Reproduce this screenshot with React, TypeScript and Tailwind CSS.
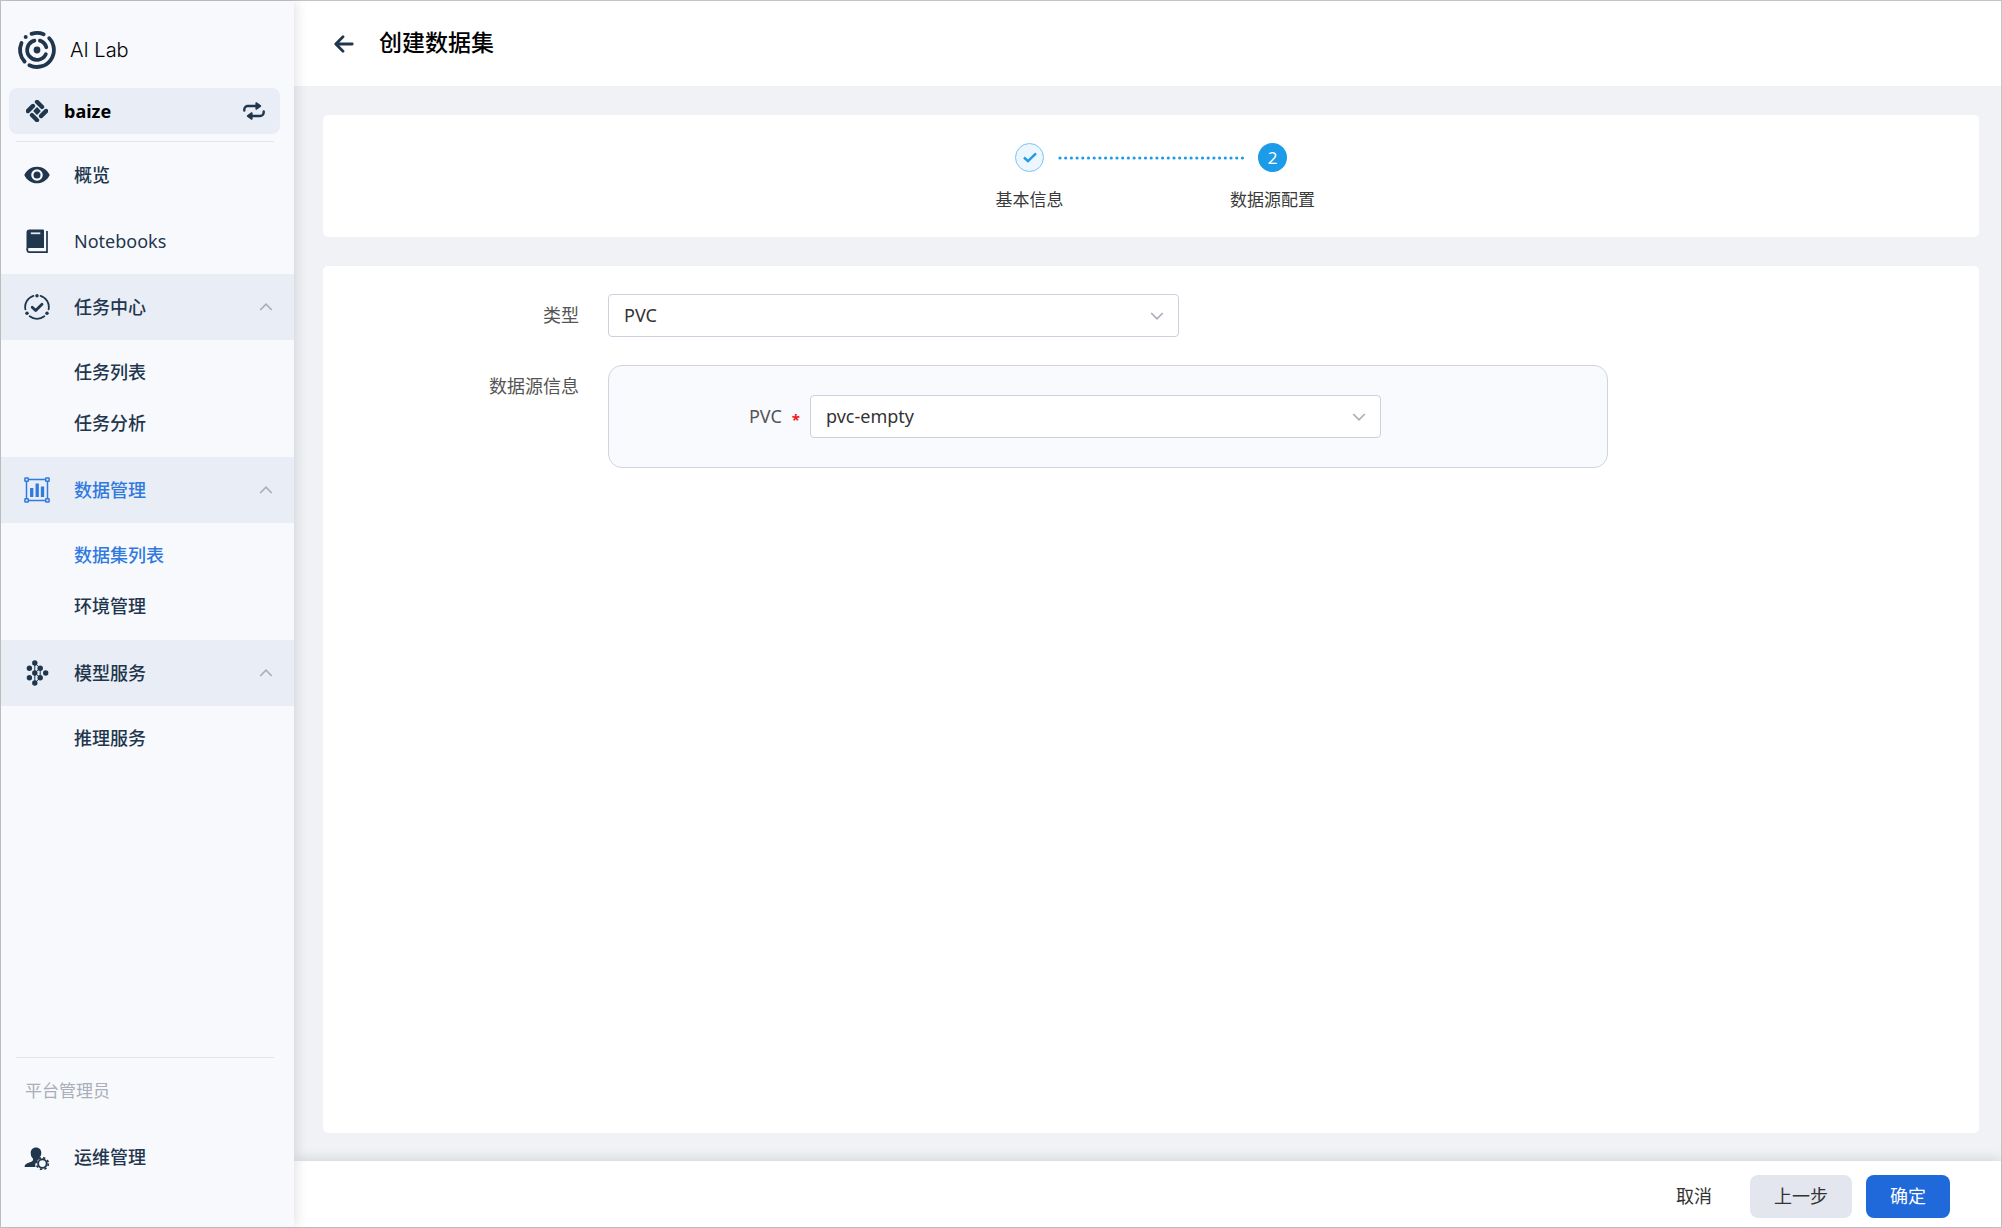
import React from "react";
import clsx from "clsx";

type IconProps = { className?: string };

const LogoIcon = ({ className }: IconProps) => (
  <svg viewBox="-20 -20 40 40" className={className} fill="none" stroke="currentColor" strokeWidth="3.8" strokeLinecap="round" aria-hidden="true">
    <path d="M-5.4 -16.1A17 17 0 0 1 6.6 -15.7" />
    <path d="M12.2 -11.8A17 17 0 0 1 -7.6 15.2" />
    <path d="M-15.5 -7A17 17 0 0 0 -12.4 11.6" />
    <path d="M-2.6 -9.4A9.8 9.8 0 1 0 8.8 4.3" />
    <path d="M2.9 -9.4A9.8 9.8 0 0 1 9.3 -2.8" />
    <circle cx="-11.3" cy="-12.9" r="2" fill="currentColor" stroke="none" />
    <circle r="3.4" fill="currentColor" stroke="none" />
  </svg>
);

const WorkspaceIcon = ({ className }: IconProps) => (
  <svg viewBox="-11 -11 22 22" className={className} fill="currentColor" aria-hidden="true">
    <g transform="rotate(45)">
      <rect x="-8.6" y="-8.6" width="11.4" height="4.3" rx="2" />
      <rect x="4.3" y="-8.6" width="4.3" height="11.4" rx="2" />
      <rect x="-2.8" y="4.3" width="11.4" height="4.3" rx="2" />
      <rect x="-8.6" y="-2.8" width="4.3" height="11.4" rx="2" />
      <rect x="-2.8" y="-2.8" width="5.6" height="5.6" rx="0.8" />
    </g>
  </svg>
);

const SwapIcon = ({ className }: IconProps) => (
  <svg viewBox="0 0 22 18" className={className} fill="none" stroke="currentColor" strokeWidth="2.4" strokeLinecap="round" strokeLinejoin="round" aria-hidden="true">
    <path d="M1.3 8.6V7.500A3.500 3.500 0 0 1 4.800 4H13" />
    <path d="M20.700 9.400v1.100A3.500 3.500 0 0 1 17.200 14H9" />
    <path d="M13.200 1v6L17.400 4zM8.800 11v6L4.600 14z" fill="currentColor" strokeWidth="1.600" />
  </svg>
);

const EyeIcon = ({ className }: IconProps) => (
  <svg viewBox="0 0 26 26" className={className} fill="currentColor" aria-hidden="true">
    <path
      fillRule="evenodd"
      d="M13 4.7C7.4 4.7 2.5 8 .3 13c2.2 5 7.1 8.3 12.7 8.3S23.5 18 25.7 13C23.5 8 18.6 4.7 13 4.7zM13 7.2a5.8 5.8 0 1 1 0 11.6 5.8 5.8 0 0 1 0-11.6z"
    />
    <circle cx="13" cy="13" r="3.5" />
  </svg>
);

const NotebookIcon = ({ className }: IconProps) => (
  <svg viewBox="0 0 26 26" className={className} fill="none" aria-hidden="true">
    <path d="M5.5 1.5H19a1 1 0 0 1 1 1V20H6a3.5 3.5 0 0 0-3.500 2V4.500a3 3 0 0 1 3-3z" fill="currentColor" />
    <path d="M6.800 5.300h9.500" stroke="#e3e8ef" strokeWidth="1.800" />
    <path d="M3.300 20.500v1.500a2.200 2.200 0 0 0 2.200 2.200H23V3" stroke="currentColor" strokeWidth="1.700" />
  </svg>
);

const TaskIcon = ({ className }: IconProps) => (
  <svg viewBox="-13 -13 26 26" className={className} fill="none" stroke="currentColor" strokeWidth="1.800" strokeLinecap="round" aria-hidden="true">
    <path d="M3.600 -11.200A11.800 11.800 0 0 1 11.600 2.400" />
    <path d="M-3.600 -11.200A11.800 11.800 0 0 0 -11.600 2.400" />
    <path d="M-7.300 9.300A11.800 11.800 0 0 0 7.300 9.300" />
    <path d="M-4.800 .2L-1.300 3.600L5 -2.700" strokeWidth="2.800" strokeLinejoin="round" />
    <g fill="currentColor" stroke="none">
      <circle cy="-11.300" r="1.700" />
      <circle cx="-10" cy="6.200" r="1.700" />
      <circle cx="10" cy="6.200" r="1.700" />
    </g>
  </svg>
);

const DataIcon = ({ className }: IconProps) => (
  <svg viewBox="0 0 26 26" className={className} fill="none" stroke="currentColor" strokeWidth="1.500" aria-hidden="true">
    <path d="M4.500 2.500h17M4.500 23.500h17M2.500 4.500v17M23.500 4.500v17" />
    <rect x=".9" y=".9" width="3.400" height="3.400" rx=".6" />
    <rect x="21.700" y=".9" width="3.400" height="3.400" rx=".6" />
    <rect x=".9" y="21.700" width="3.400" height="3.400" rx=".6" />
    <rect x="21.700" y="21.700" width="3.400" height="3.400" rx=".6" />
    <path d="M7.700 11v9M13.200 6.500V20M18.500 9.500V20" strokeWidth="3.300" />
  </svg>
);

const ModelIcon = ({ className }: IconProps) => (
  <svg viewBox="0 0 26 26" className={className} fill="currentColor" aria-hidden="true">
    <path d="M10.800 3v20M10.800 3l5.400 5.200v9.500L10.800 23M10.800 13l5.400 4.700M10.800 13l5.400-4.800" stroke="currentColor" strokeWidth="1" fill="none" />
    <circle cx="10.800" cy="3" r="2.700" />
    <circle cx="5.400" cy="8.200" r="2.700" />
    <circle cx="16.200" cy="8.200" r="2.700" />
    <circle cx="10.800" cy="13" r="2.700" />
    <circle cx="21.700" cy="13" r="2.700" />
    <circle cx="5.400" cy="17.700" r="2.700" />
    <circle cx="16.200" cy="17.700" r="2.700" />
    <circle cx="10.800" cy="23" r="2.700" />
  </svg>
);

const OpsIcon = ({ className }: IconProps) => (
  <svg viewBox="0 -2 26 26" className={className} fill="none" aria-hidden="true">
    <path
      fill="currentColor"
      d="M12 1.500c3.300 0 5.300 2.400 5.300 5.400 0 2-.8 3.800-2.100 5-.4.500-.5 1-.4 1.600A7 7 0 0 0 11.500 21H.6c0-2.700 2.400-3.700 5.200-4.700 2.400-.8 3.400-1.500 3.300-3-.1-.6-.3-1-.7-1.400A6.900 6.900 0 0 1 6.700 7c0-3.100 2-5.500 5.300-5.500z"
    />
    <circle cx="18.400" cy="17.600" r="4.300" stroke="currentColor" strokeWidth="1.900" />
    <circle cx="18.400" cy="17.600" r="5.900" stroke="currentColor" strokeWidth="1.700" strokeDasharray="2.300 2.334" />
  </svg>
);

const BackIcon = ({ className }: IconProps) => (
  <svg viewBox="0 0 20 18" className={className} fill="none" stroke="currentColor" strokeWidth="2.800" strokeLinecap="round" strokeLinejoin="round" aria-hidden="true">
    <path d="M18.200 9H2M9 1.800L1.800 9L9 16.200" />
  </svg>
);

const Chevron = ({ className }: IconProps) => (
  <svg viewBox="0 0 14 8" className={clsx("h-2 w-3.5", className)} fill="none" stroke="currentColor" strokeWidth="1.700" aria-hidden="true">
    <path d="M1.200 1L7 6.800L12.800 1" />
  </svg>
);

type Group = {
  label: string;
  icon: React.FC<IconProps>;
  active?: boolean;
  children: { label: string; active?: boolean }[];
};

const groups: Group[] = [
  { label: "任务中心", icon: TaskIcon, children: [{ label: "任务列表" }, { label: "任务分析" }] },
  { label: "数据管理", icon: DataIcon, active: true, children: [{ label: "数据集列表", active: true }, { label: "环境管理" }] },
  { label: "模型服务", icon: ModelIcon, children: [{ label: "推理服务" }] },
];

function NavLink({ label, icon: Icon, className = "font-medium" }: { label: string; icon: React.FC<IconProps>; className?: string }) {
  return (
    <a href="#" className={clsx("flex h-[66px] items-center gap-6 pl-[23px]", className)}>
      <Icon className="size-[26px]" />
      <span>{label}</span>
    </a>
  );
}

function Sidebar() {
  return (
    <aside className="z-10 flex w-[293px] shrink-0 flex-col bg-[#f7f9fd] text-[18px] text-[#1f364d] shadow-[2px_0_12px_rgba(0,0,0,0.12)]">
      <div className="flex h-[87px] items-center gap-[13px] pt-2.5 pl-4">
        <LogoIcon className="size-10" />
        <span className="font-[Inter,sans-serif] text-[20px] font-light text-black">AI Lab</span>
      </div>
      <button type="button" className="mr-3.5 ml-2 flex h-[46px] items-center rounded-lg bg-[#e9eef6] pr-[15px] pl-[17px]">
        <WorkspaceIcon className="size-[22px]" />
        <span className="ml-4 font-bold text-black">baize</span>
        <SwapIcon className="ml-auto h-[18px] w-[22px]" />
      </button>
      <hr className="mt-[7px] mr-5 ml-[15px] border-[#e2e5eb]" />
      <nav>
        <NavLink label="概览" icon={EyeIcon} />
        <NavLink label="Notebooks" icon={NotebookIcon} className="font-normal" />
        {groups.map(({ label, icon: Icon, active, children }) => (
          <div key={label}>
            <button
              type="button"
              className={clsx("flex h-[66px] w-full items-center gap-6 bg-[#e9eef6] pr-[21px] pl-[23px] font-medium", active && "text-[#3079de]")}
            >
              <Icon className="size-[26px]" />
              <span>{label}</span>
              <Chevron className="ml-auto rotate-180 text-[#a9aeb8]" />
            </button>
            <ul className="pt-[7px] pb-2">
              {children.map((child) => (
                <li key={child.label}>
                  <a href="#" className={clsx("flex h-[51px] items-center pl-[73px] font-medium", child.active && "text-[#3079de]")}>
                    {child.label}
                  </a>
                </li>
              ))}
            </ul>
          </div>
        ))}
      </nav>
      <div className="mt-auto pb-[37px]">
        <hr className="mr-5 ml-[15px] border-[#e2e5eb]" />
        <p className="flex h-[66px] items-center pl-6 text-[17px] text-[#a9aeb8]">平台管理员</p>
        <NavLink label="运维管理" icon={OpsIcon} />
      </div>
    </aside>
  );
}

function Steps() {
  return (
    <section className="flex h-[122px] flex-col items-center rounded-[5px] bg-white pt-7">
      <div className="flex items-center gap-3.5">
        <span className="flex size-[29px] items-center justify-center rounded-full border border-[#7cc4f3] bg-[#ebf6fe] text-[#1c9be8]">
          <svg viewBox="0 0 14 11" className="h-[11px] w-3.5" fill="none" stroke="currentColor" strokeWidth="2.400" aria-hidden="true">
            <path d="M1 5.500L5 9.200L13 1.300" />
          </svg>
        </span>
        <svg className="h-1 w-[186px]" aria-hidden="true">
          <line x1="2" y1="2" x2="185" y2="2" stroke="#1c9be8" strokeWidth="3.200" strokeLinecap="round" strokeDasharray="0 5.700" />
        </svg>
        <span className="flex size-[29px] items-center justify-center rounded-full bg-[#1c9be8] text-[17px] text-white">2</span>
      </div>
      <div className="mt-[15px] grid grid-cols-[243px_243px] text-center text-[17px] leading-[26px] text-[#3a3a3a]">
        <span>基本信息</span>
        <span>数据源配置</span>
      </div>
    </section>
  );
}

function Select({ id, value }: { id: string; value: string }) {
  return (
    <div className="relative w-[571px]">
      <select id={id} defaultValue={value} className="h-[43px] w-full appearance-none rounded border border-[#cdd1de] bg-white px-[15px] text-[#333]">
        <option>{value}</option>
      </select>
      <Chevron className="pointer-events-none absolute top-[18px] right-[15px] text-[#a9aeb8]" />
    </div>
  );
}

export default function App() {
  return (
    <div className="flex min-h-screen border border-[#c4c4c4] bg-[#f0f2f6] font-['Noto_Sans','Noto_Sans_CJK_SC',sans-serif] text-[18px]">
      <Sidebar />
      <div className="flex min-w-0 flex-1 flex-col">
        <header className="flex h-[85px] items-center gap-[25px] bg-white pl-10">
          <button type="button" aria-label="返回" className="text-[#1f364d]">
            <BackIcon className="h-[18px] w-5" />
          </button>
          <h1 className="pb-1 text-[23px] leading-[30px] font-medium text-black">创建数据集</h1>
        </header>
        <main className="flex flex-1 flex-col gap-[29px] pt-[29px] pr-[22px] pb-7 pl-[29px]">
          <Steps />
          <form id="dataset" className="flex-1 rounded-[5px] bg-white py-7 text-[#555]">
            <div className="grid grid-cols-[256px_1fr] gap-x-[29px] gap-y-7">
              <label htmlFor="type" className="text-right leading-[42px]">类型</label>
              <Select id="type" value="PVC" />
              <span className="text-right leading-[42px]">数据源信息</span>
              <div className="flex w-[1000px] items-center rounded-[14px] border border-[#d0d4e0] bg-[#f9fafd] py-[29px]">
                <label htmlFor="pvc" className="flex w-[201px] items-center justify-end gap-2.5 pr-2.5">
                  PVC
                  <span className="pt-1.5 text-[15px] font-bold text-[#f01818]">*</span>
                </label>
                <Select id="pvc" value="pvc-empty" />
              </div>
            </div>
          </form>
        </main>
        <footer className="flex h-[66px] items-start justify-end gap-3.5 bg-white pt-3.5 pr-[51px] text-[#333] shadow-[0_-2px_12px_rgba(0,0,0,0.12)]">
          <button type="button" className="h-[43px] px-6">取消</button>
          <button type="button" className="h-[43px] rounded-lg bg-[#e3e6ee] px-6">上一步</button>
          <button type="submit" form="dataset" className="h-[43px] rounded-lg bg-[#1f69db] px-6 text-white">确定</button>
        </footer>
      </div>
    </div>
  );
}
